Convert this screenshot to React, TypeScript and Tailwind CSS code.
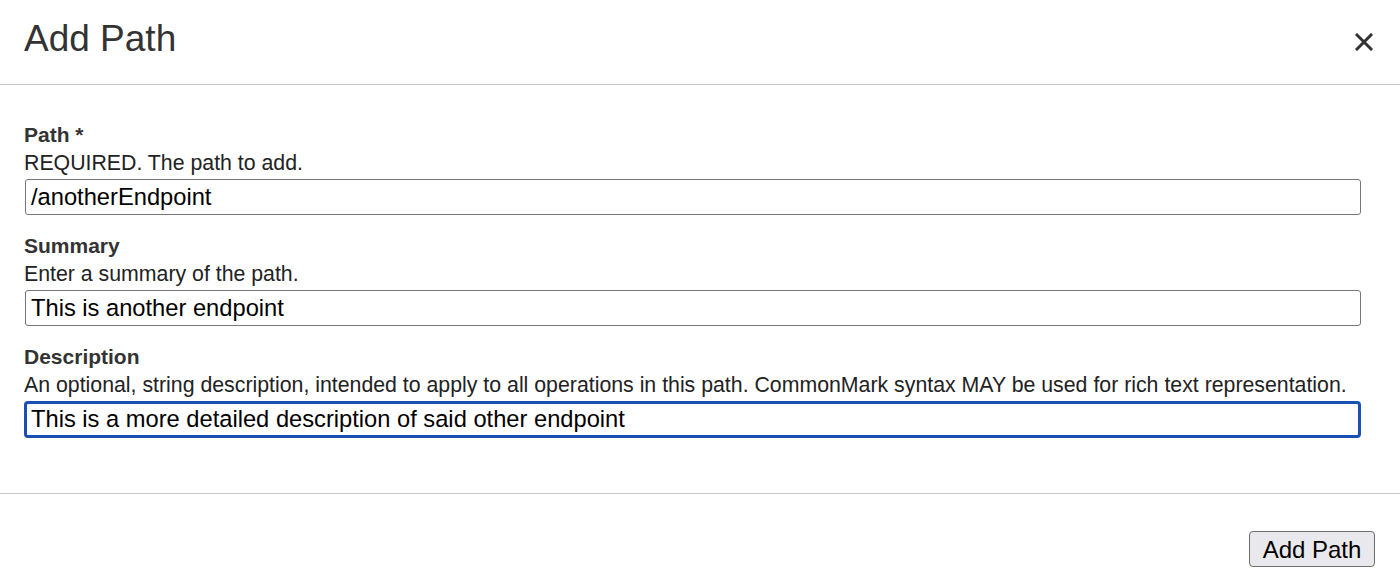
const fields = [
  {
    label: 'Path *',
    help: 'REQUIRED. The path to add.',
    value: '/anotherEndpoint',
    focused: false,
  },
  {
    label: 'Summary',
    help: 'Enter a summary of the path.',
    value: 'This is another endpoint',
    focused: false,
  },
  {
    label: 'Description',
    help: 'An optional, string description, intended to apply to all operations in this path. CommonMark syntax MAY be used for rich text representation.',
    value: 'This is a more detailed description of said other endpoint',
    focused: true,
  },
];

export default function App() {
  return (
    <div className="h-[588px] w-[1400px] overflow-hidden bg-white font-['Liberation_Sans',Arial,sans-serif] text-[#222]">
      {/* header */}
      <div className="flex h-[85px] items-start justify-between border-b border-[#c8c8c8] pl-6 pr-[27px]">
        <h1 className="mt-[15px] text-[37px] leading-[48px] font-normal text-[#333]">Add Path</h1>
        <button className="mt-[33px] text-[#333]">
          <svg width="18" height="18" viewBox="0 0 18 18" fill="none" stroke="currentColor" strokeWidth="3" strokeLinecap="square">
            <path d="M2 2 L16 16 M16 2 L2 16" />
          </svg>
        </button>
      </div>

      {/* body */}
      <div className="flex flex-col gap-[17px] border-b border-[#c8c8c8] pt-[36px] pb-[55px] pl-6 pr-[39px]">
        {fields.map((f) => (
          <div key={f.label} className="flex flex-col">
            <label className="text-[21px] leading-[28px] font-bold text-[#333]">{f.label}</label>
            <div className="text-[21.3px] leading-[28px] text-[#222]">{f.help}</div>
            <input
              readOnly
              value={f.value}
              className={
                f.focused
                  ? 'mt-[2px] h-[37px] w-full rounded-[4px] border-[3px] border-[#1a4fb5] px-[4px] text-[23.7px] text-black outline-none'
                  : 'mt-[2px] ml-px h-[36px] w-[1336px] rounded-[3px] border border-[#777] px-[5px] text-[23.7px] text-black outline-none'
              }
            />
          </div>
        ))}
      </div>

      {/* footer */}
      <div className="flex justify-end pt-[37px] pr-[25px]">
        <button className="h-[36px] w-[126px] rounded-[4px] border border-[#6e6e6e] bg-[#e9e9ed] text-[24px] text-black">
          Add Path
        </button>
      </div>
    </div>
  );
}
